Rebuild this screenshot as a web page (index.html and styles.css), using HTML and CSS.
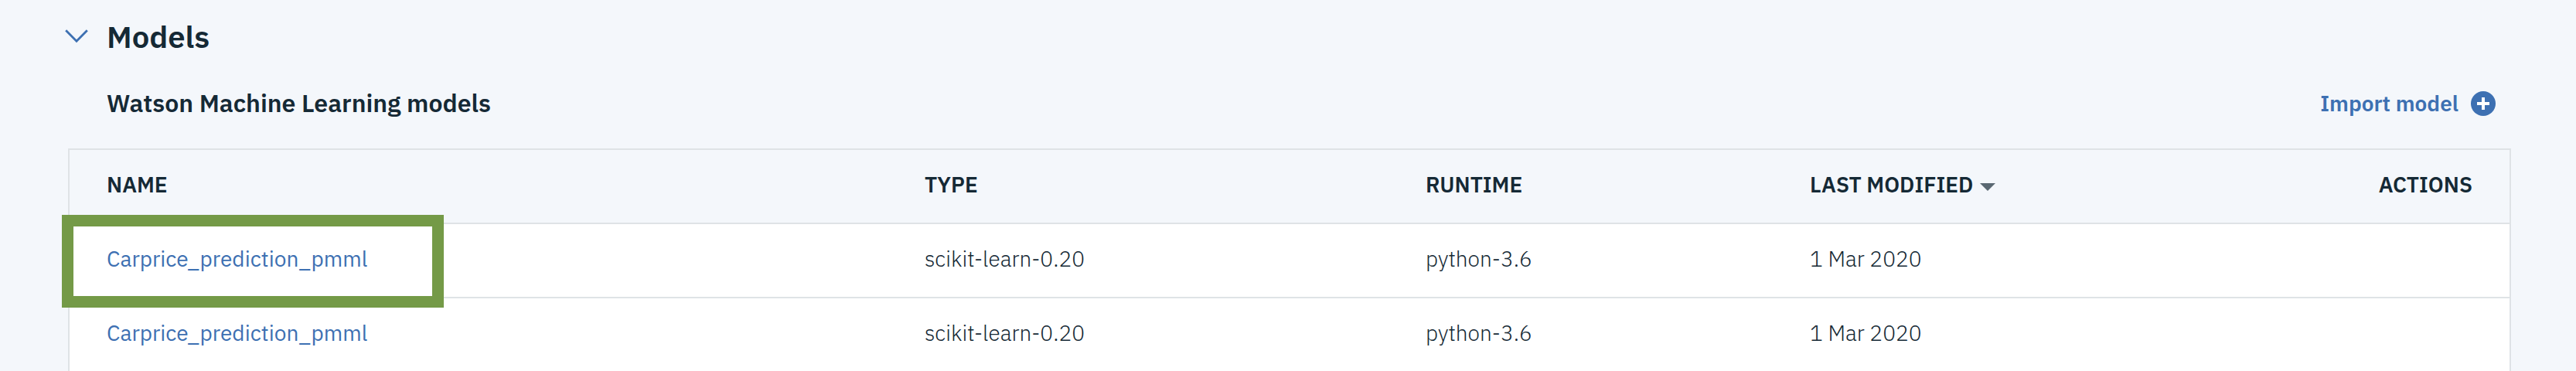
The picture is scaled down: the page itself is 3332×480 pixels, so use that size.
FILE: index.html
```html
<!DOCTYPE html>
<html lang="en">
<head>
<meta charset="utf-8">
<title>Models</title>
<link rel="stylesheet" href="styles.css">
</head>
<body>
<main class="section">
  <header class="section-head">
    <svg class="chevron" viewBox="0 0 30 18" fill="none"><path d="M1.2 1.2 15 15.2 28.8 1.2" stroke="#3d70b2" stroke-width="2.8"/></svg>
    <h1 class="title">Models</h1>
  </header>
  <div class="subhead">
    <h2 class="subtitle">Watson Machine Learning models</h2>
    <a class="import">Import model
      <svg class="plus" viewBox="0 0 32 32"><circle cx="16" cy="16" r="16" fill="#3d70b2"/><path d="M16 8v16M8 16h16" stroke="#fff" stroke-width="4"/></svg>
    </a>
  </div>
  <div class="table">
    <div class="row head">
      <span>NAME</span><span>TYPE</span><span>RUNTIME</span>
      <span class="sorted">LAST MODIFIED<svg class="caret" viewBox="0 0 20 10"><path d="M0 0h20L10 10z" fill="#5a6872"/></svg></span>
      <span class="actions">ACTIONS</span>
    </div>
    <div class="row highlighted">
      <a class="link">Carprice_prediction_pmml</a><span>scikit-learn-0.20</span><span>python-3.6</span><span>1 Mar 2020</span><span></span>
    </div>
    <div class="row">
      <a class="link">Carprice_prediction_pmml</a><span>scikit-learn-0.20</span><span>python-3.6</span><span>1 Mar 2020</span><span></span>
    </div>
  </div>
</main>
</body>
</html>
```
FILE: styles.css
```css
*, *::after { box-sizing: border-box; }
body {
  margin: 0;
  height: 480px;
  overflow: hidden;
  background: #f4f7fb;
  color: #152935;
  font-family: "IBM Plex Sans", "Open Sans", sans-serif;
}
.section { padding: 17px 84px 0 83px; }
.section-head { display: flex; align-items: center; gap: 24px; height: 60px; }
.chevron { width: 30px; height: 18px; margin-left: 1px; }
.title { margin: 0; font-size: 40px; font-weight: 600; line-height: 60px; }
.subhead {
  display: flex;
  align-items: center;
  justify-content: space-between;
  height: 60px;
  margin-top: 26px;
  padding: 0 20px 0 55px;
}
.subtitle { margin: 0; font-size: 32px; font-weight: 600; line-height: 60px; }
.import {
  display: flex;
  align-items: center;
  gap: 16px;
  color: #3d70b2;
  font-size: 28px;
  font-weight: 600;
}
.plus { width: 32px; height: 32px; margin-top: 2px; }
.table {
  height: 300px;
  margin: 29px 0 0 5px;
  border: 2px solid #dfe3e6;
  background: #fff;
}
.row {
  position: relative;
  display: grid;
  grid-template-columns: 1058px 648px 497px 1fr 200px;
  align-items: center;
  height: 96px;
  padding: 0 48px 4px;
  border-bottom: 2px solid #dfe3e6;
  font-size: 28px;
  font-weight: 300;
  line-height: 36px;
}
.row:last-child { border-bottom: 0; padding-bottom: 6px; }
.head { background: #f4f7fb; font-weight: 600; }
.sorted { display: flex; align-items: center; gap: 9px; }
.caret { width: 20px; height: 10px; margin-top: 5px; }
.actions { text-align: right; }
.link { color: #3d70b2; font-weight: 400; letter-spacing: 0.04px; }
/* Callout frame over the first model */
.highlighted::after {
  content: "";
  position: absolute;
  left: -10px;
  top: -12px;
  width: 494px;
  height: 120px;
  border: 15px solid #749a47;
  z-index: 1;
}
```
